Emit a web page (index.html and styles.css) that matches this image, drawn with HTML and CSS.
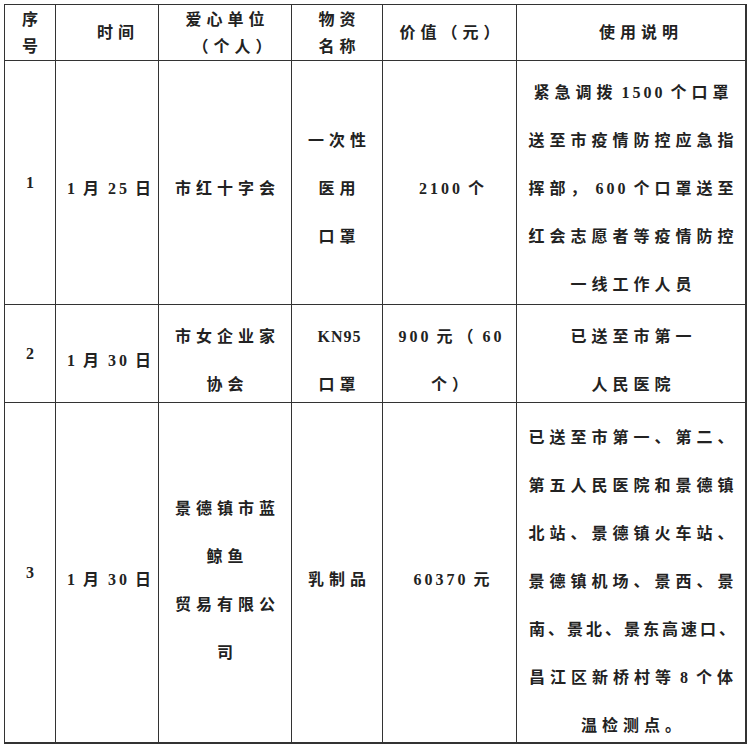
FILE: index.html
```html
<!DOCTYPE html>
<html lang="zh-CN">
<head>
<meta charset="utf-8">
<title>爱心捐赠物资使用情况</title>
<link rel="stylesheet" href="styles.css">
</head>
<body>
<div class="sheet">
  <div class="cell head"><div class="t">序<br>号</div></div>
  <div class="cell head shift-time"><div class="t">时间</div></div>
  <div class="cell head"><div class="t">爱心单位<br><span class="indent">（个人）</span></div></div>
  <div class="cell head"><div class="t">物资<br>名称</div></div>
  <div class="cell head"><div class="t">价值（元）</div></div>
  <div class="cell head shift-desc last-col"><div class="t">使用说明</div></div>

  <div class="cell"><div class="t">1</div></div>
  <div class="cell p13"><div class="t"><span class="n">1</span>月<span class="n">25</span>日</div></div>
  <div class="cell p13"><div class="t">市红十字会</div></div>
  <div class="cell p13"><div class="t">一次性<br>医用<br>口罩</div></div>
  <div class="cell p13"><div class="t"><span class="n">2100</span>个</div></div>
  <div class="cell p13 last-col"><div class="t">紧急调拨<span class="n">1500</span>个口罩<br>送至市疫情防控应急指<br>挥部，<span class="n">600</span>个口罩送至<br>红会志愿者等疫情防控<br>一线工作人员</div></div>

  <div class="cell"><div class="t">2</div></div>
  <div class="cell p14"><div class="t"><span class="n">1</span>月<span class="n">30</span>日</div></div>
  <div class="cell p14"><div class="t">市女企业家<br>协会</div></div>
  <div class="cell p14"><div class="t"><span class="latin">KN95</span><br>口罩</div></div>
  <div class="cell p14"><div class="t"><span class="n">900</span>元（<span class="n">60</span><br>个）</div></div>
  <div class="cell p14 last-col"><div class="t">已送至市第一<br>人民医院</div></div>

  <div class="cell last-row"><div class="t">3</div></div>
  <div class="cell p14 last-row"><div class="t"><span class="n">1</span>月<span class="n">30</span>日</div></div>
  <div class="cell p16 last-row"><div class="t">景德镇市蓝<br>鲸鱼<br>贸易有限公<br>司</div></div>
  <div class="cell p14 last-row"><div class="t">乳制品</div></div>
  <div class="cell p14 last-row"><div class="t"><span class="n">60370</span>元</div></div>
  <div class="cell p19 last-row last-col"><div class="t">已送至市第一、第二、<br>第五人民医院和景德镇<br>北站、景德镇火车站、<br>景德镇机场、景西、景<br><span class="tight">南、景北、景东高速口、</span><br>昌江区新桥村等<span class="n">8</span>个体<br>温检测点。</div></div>
</div>
</body>
</html>
```

FILE: styles.css
```css
body {
  margin: 0;
  background: #ffffff;
}

.sheet {
  display: grid;
  grid-template-columns: 51px 103px 133px 91px 134px 230px;
  grid-template-rows: 56px 244px 98px 341px;
  width: max-content;
  margin: 4px 0 0 4px;
  border-top: 1px solid #333333;
  border-left: 1px solid #333333;
  font-family: "Liberation Serif", "Noto Sans CJK SC", serif;
  font-weight: 700;
  font-size: 16px;
  letter-spacing: 5px;
  color: #222222;
}

.cell {
  box-sizing: border-box;
  border-right: 1px solid #333333;
  border-bottom: 1px solid #333333;
  display: flex;
  align-items: center;
  justify-content: center;
  text-align: center;
  white-space: nowrap;
  line-height: 48px;
  padding-left: 5px;
}

.t {
  text-align: center;
}

.head {
  line-height: 27px;
}

.indent {
  padding-left: 14px;
}

.shift-time {
  padding-left: 22px;
}

.shift-desc {
  padding-left: 20px;
}

.last-col {
  border-right-width: 2px;
}

.last-row {
  border-bottom-width: 2px;
}

.p13 { padding-top: 13px; }
.p14 { padding-top: 14px; }
.p16 { padding-top: 16px; }
.p19 { padding-top: 19px; }

.n {
  letter-spacing: 3px;
  margin: 0 5px 0 4px;
}

.latin {
  letter-spacing: 1px;
}

.tight {
  letter-spacing: 3px;
}
```
